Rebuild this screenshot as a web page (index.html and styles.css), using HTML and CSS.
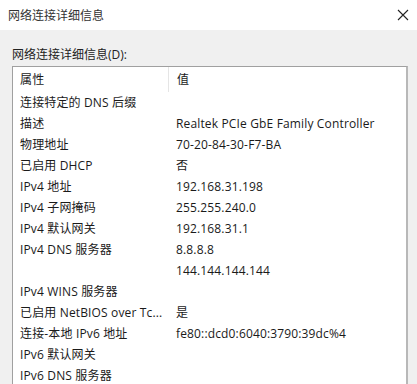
FILE: index.html
```html
<!DOCTYPE html>
<html lang="zh-CN">
<head>
  <meta charset="UTF-8" />
  <title>网络连接详细信息</title>
  <link rel="stylesheet" href="styles.css">
</head>
<body>
  <div class="dialog">
    <div class="titlebar">
      <span class="title">网络连接详细信息</span>
      <svg class="close" width="12" height="12" viewBox="0 0 12 12">
        <path d="M1 1 L11 11 M11 1 L1 11" stroke="#222" stroke-width="1.1" fill="none"/>
      </svg>
    </div>
    <div class="panel">
      <div class="label">网络连接详细信息(D):</div>
      <div class="list">
        <div class="head">
          <div class="col prop">属性</div>
          <div class="col val">值</div>
        </div>
        <div class="row"><div class="prop">连接特定的 DNS 后缀</div><div class="val"></div></div>
        <div class="row"><div class="prop">描述</div><div class="val">Realtek PCIe GbE Family Controller</div></div>
        <div class="row"><div class="prop">物理地址</div><div class="val">70-20-84-30-F7-BA</div></div>
        <div class="row"><div class="prop">已启用 DHCP</div><div class="val">否</div></div>
        <div class="row"><div class="prop">IPv4 地址</div><div class="val">192.168.31.198</div></div>
        <div class="row"><div class="prop">IPv4 子网掩码</div><div class="val">255.255.240.0</div></div>
        <div class="row"><div class="prop">IPv4 默认网关</div><div class="val">192.168.31.1</div></div>
        <div class="row"><div class="prop">IPv4 DNS 服务器</div><div class="val">8.8.8.8</div></div>
        <div class="row"><div class="prop"></div><div class="val">144.144.144.144</div></div>
        <div class="row"><div class="prop">IPv4 WINS 服务器</div><div class="val"></div></div>
        <div class="row"><div class="prop">已启用 NetBIOS over Tc...</div><div class="val">是</div></div>
        <div class="row"><div class="prop">连接-本地 IPv6 地址</div><div class="val">fe80::dcd0:6040:3790:39dc%4</div></div>
        <div class="row"><div class="prop">IPv6 默认网关</div><div class="val"></div></div>
        <div class="row"><div class="prop">IPv6 DNS 服务器</div><div class="val"></div></div>
      </div>
    </div>
  </div>
</body>
</html>
```

FILE: styles.css
```css
html, body {
  margin: 0;
  padding: 0;
  height: 100%;
  overflow: hidden;
}
body {
  font-family: "Open Sans", "Noto Sans CJK SC", sans-serif;
  font-size: 12px;
  color: #1a1a1a;
  background: #f0f0f0;
}
.titlebar {
  height: 30px;
  background: #ffffff;
  display: flex;
  align-items: center;
  justify-content: space-between;
  padding: 0 7px 0 8px;
}
.title {
  color: #333;
}
.close {
  margin-right: 1px;
}
.panel {
  padding: 13px 9px 0 12px;
}
.label {
  height: 23px;
  line-height: 23px;
  color: #222;
}
.list {
  background: #fff;
  border-top: 1px solid #a0a0a0;
  border-left: 1px solid #a0a0a0;
  border-right: 2px solid #b8b8b8;
  height: 317px;
  overflow: hidden;
}
.head, .row {
  display: flex;
  height: 21px;
  line-height: 21px;
  letter-spacing: 0.15px;
}
.head {
  height: 25px;
  line-height: 25px;
}
.prop {
  width: 148px;
  padding-left: 7px;
  white-space: nowrap;
  overflow: hidden;
}
.head .prop {
  border-right: 1px solid #e5e5e5;
}
.val {
  padding-left: 8px;
  white-space: nowrap;
}
```
